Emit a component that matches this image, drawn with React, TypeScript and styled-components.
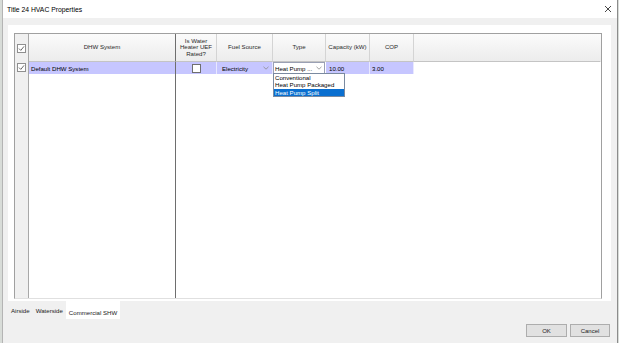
import styled, { createGlobalStyle } from 'styled-components';

const GlobalStyle = createGlobalStyle`
  html, body { margin: 0; padding: 0; }
  body {
    width: 619px;
    height: 343px;
    overflow: hidden;
    background: #d8dcd8;
    font-family: "Liberation Sans", Arial, sans-serif;
  }
`;

const Window = styled.div`
  margin-left: 2px;
  width: 616px;
  height: 343px;
  box-sizing: border-box;
  border-left: 1px solid #b4b4b4;
  border-right: 1px solid #8c8c8c;
  background: #f0f0f0;
  display: flex;
  flex-direction: column;
`;

const TitleBar = styled.div`
  height: 18px;
  background: #ffffff;
  display: flex;
  align-items: center;
  justify-content: space-between;
  padding: 0 5px 0 4px;
  font-size: 6.8px;
  color: #000;
`;

const Body = styled.div`
  flex: 1;
  display: flex;
  flex-direction: column;
  padding: 7px 6px 0 5px;
`;

const Panel = styled.div`
  height: 276px;
  box-sizing: border-box;
  background: #ffffff;
  padding: 8px 9px 2px 6px;
  display: flex;
`;

const Grid = styled.div`
  flex: 1;
  display: grid;
  grid-template-columns: 14px 147px 41px 56px 53px 44px 44px 1fr;
  grid-template-rows: 28px 12px 1fr;
  border: 1px solid #a0a0a0;
  border-bottom-color: #e0e0e0;
  font-size: 6.1px;
`;

const HeadCell: any = styled.div`
  background: linear-gradient(#fbfbfb, #ececec);
  border-right: 1px solid ${(p: any) => (p.frozen ? '#6e6e6e' : p.last ? 'transparent' : '#d4d4d4')};
  border-bottom: 1px solid #c4c4c4;
  display: flex;
  align-items: center;
  justify-content: center;
  text-align: center;
  line-height: 6.6px;
  color: #2a2a2a;
`;

const Cell: any = styled.div`
  background: ${(p: any) => (p.edit ? '#ffffff' : p.selected ? '#c6c6ff' : '#ffffff')};
  border-right: 1px solid ${(p: any) => (p.frozen ? '#6e6e6e' : p.selected ? '#e8e8ff' : 'transparent')};
  ${(p: any) => p.edit && 'box-shadow: inset 0 0 0 1px #9aa0b4;'}
  position: relative;
  display: flex;
  align-items: center;
  justify-content: ${(p: any) => (p.center ? 'center' : 'space-between')};
  padding: 0 ${(p: any) => (p.center ? 0 : 3)}px 0 ${(p: any) => (p.center ? 0 : p.pad ?? 2)}px;
  color: #000;
  white-space: nowrap;
`;

const RowHead = styled.div`
  background: #f0f0f0;
  border-right: 1px solid #a8a8a8;
  display: flex;
  justify-content: center;
  align-items: flex-start;
  padding-top: 1px;
`;

const FrozenFill = styled.div`
  border-right: 1px solid #6e6e6e;
`;

const Fill = styled.div`
  grid-column: span 6;
`;

const Box: any = styled.div`
  width: 9px;
  height: 9px;
  box-sizing: border-box;
  background: #fff;
  border: 1px solid ${(p: any) => (p.dark ? '#6f6f6f' : '#8f8f8f')};
  display: flex;
  align-items: center;
  justify-content: center;
`;

const HeadBox = styled(Box)`
  align-self: center;
`;

const DropList = styled.div`
  position: absolute;
  top: 11px;
  left: 0;
  width: 72px;
  box-sizing: border-box;
  background: #fff;
  border: 1px solid #7a8aa0;
  z-index: 2;
`;

const DropItem: any = styled.div`
  height: 7.4px;
  line-height: 7.4px;
  padding-left: 1px;
  background: ${(p: any) => (p.active ? '#0a6fd0' : 'transparent')};
  color: ${(p: any) => (p.active ? '#fff' : '#000')};
`;

const Tabs = styled.div`
  display: flex;
  height: 19px;
  align-items: stretch;
  font-size: 6.1px;
`;

const Tab: any = styled.div`
  display: flex;
  align-items: center;
  padding: ${(p: any) => (p.active ? 4 : 2)}px 3px 0;
  background: ${(p: any) => (p.active ? '#ffffff' : 'transparent')};
  color: #222;
  margin-bottom: ${(p: any) => (p.active ? 1 : 3)}px;
`;

const Footer = styled.div`
  display: flex;
  justify-content: flex-end;
  gap: 3px;
  padding: 4px 1px 0 0;
`;

const Button: any = styled.div`
  width: ${(p: any) => p.w}px;
  height: 13px;
  box-sizing: border-box;
  background: #e1e1e1;
  border: 1px solid #adadad;
  display: flex;
  align-items: center;
  justify-content: center;
  font-size: 6px;
  color: #222;
`;

const Check = () => (
  <svg width="7" height="7" viewBox="0 0 7 7">
    <polyline points="1,3.6 2.8,5.4 6,1.4" fill="none" stroke="#5a5a5a" strokeWidth="0.9" />
  </svg>
);

const Chevron = () => (
  <svg width="6" height="4" viewBox="0 0 6 4">
    <polyline points="0.5,0.8 3,3.2 5.5,0.8" fill="none" stroke="#8a8a8a" strokeWidth="0.8" />
  </svg>
);

const CloseIcon = () => (
  <svg width="8" height="8" viewBox="0 0 8 8">
    <path d="M1 1 L7 7 M7 1 L1 7" stroke="#333" strokeWidth="0.9" />
  </svg>
);

const typeOptions = ['Conventional', 'Heat Pump Packaged', 'Heat Pump Split'];

const App = () => {
  return (
    <>
      <GlobalStyle />
      <Window>
        <TitleBar>
          <span>Title 24 HVAC Properties</span>
          <CloseIcon />
        </TitleBar>
        <Body>
          <Panel>
            <Grid>
              <RowHead>
                <HeadBox>
                  <Check />
                </HeadBox>
              </RowHead>
              <HeadCell frozen>DHW System</HeadCell>
              <HeadCell>
                Is Water
                <br />
                Heater UEF
                <br />
                Rated?
              </HeadCell>
              <HeadCell>Fuel Source</HeadCell>
              <HeadCell>Type</HeadCell>
              <HeadCell>Capacity (kW)</HeadCell>
              <HeadCell>COP</HeadCell>
              <HeadCell last />

              <RowHead>
                <Box>
                  <Check />
                </Box>
              </RowHead>
              <Cell selected frozen>Default DHW System</Cell>
              <Cell selected center>
                <Box dark />
              </Cell>
              <Cell selected pad={5}>
                Electricity
                <Chevron />
              </Cell>
              <Cell edit>
                Heat Pump ...
                <Chevron />
                <DropList>
                  {typeOptions.map((o) => (
                    <DropItem key={o} active={o === 'Heat Pump Split'}>
                      {o}
                    </DropItem>
                  ))}
                </DropList>
              </Cell>
              <Cell selected pad={3}>10.00</Cell>
              <Cell selected pad={2}>3.00</Cell>
              <div />

              <RowHead />
              <FrozenFill />
              <Fill />
            </Grid>
          </Panel>
          <Tabs>
            <Tab>Airside</Tab>
            <Tab>Waterside</Tab>
            <Tab active>Commercial SHW</Tab>
          </Tabs>
          <Footer>
            <Button w={41}>OK</Button>
            <Button w={40}>Cancel</Button>
          </Footer>
        </Body>
      </Window>
    </>
  );
};

export default App;
